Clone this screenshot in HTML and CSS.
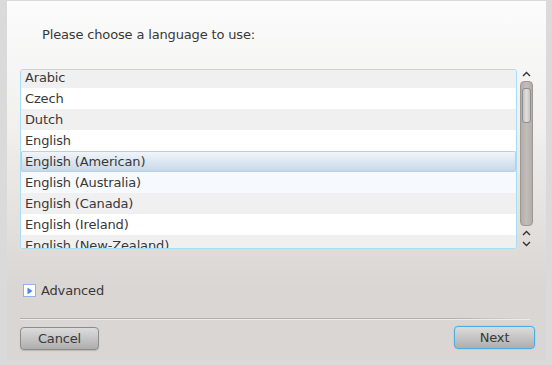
FILE: index.html
```html
<!DOCTYPE html>
<html>
<head>
    <meta charset="utf-8">
    <title>Language</title>
    <link rel="stylesheet" href="styles.css">
</head>
<body>
    <div class="panel">
        <div class="title">Please choose a language to use:</div>

        <div class="list-area">
            <div class="list">
                <div class="rows">
                    <div class="row alt">Arabic</div>
                    <div class="row">Czech</div>
                    <div class="row alt">Dutch</div>
                    <div class="row">English</div>
                    <div class="row selected">English (American)</div>
                    <div class="row hover">English (Australia)</div>
                    <div class="row alt">English (Canada)</div>
                    <div class="row">English (Ireland)</div>
                    <div class="row alt">English (New-Zealand)</div>
                </div>
            </div>

            <div class="scrollbar">
                <svg class="arrow" width="9" height="6" viewBox="0 0 9 6"><path d="M1 5 L4.5 1.5 L8 5" fill="none" stroke="#333" stroke-width="1.4"/></svg>
                <div class="trough">
                    <div class="handle"></div>
                </div>
                <svg class="arrow" width="9" height="6" viewBox="0 0 9 6"><path d="M1 5 L4.5 1.5 L8 5" fill="none" stroke="#333" stroke-width="1.4"/></svg>
                <svg class="arrow" width="9" height="6" viewBox="0 0 9 6"><path d="M1 1 L4.5 4.5 L8 1" fill="none" stroke="#333" stroke-width="1.4"/></svg>
            </div>
        </div>

        <div class="advanced">
            <span class="expander">
                <svg width="12" height="12" viewBox="0 0 12 12"><path d="M3.5 2.5 L8.5 6 L3.5 9.5 Z" fill="#4f86e6"/></svg>
            </span>
            <span>Advanced</span>
        </div>

        <div class="separator"></div>

        <div class="buttons">
            <button class="btn">Cancel</button>
            <button class="btn default">Next</button>
        </div>
    </div>
</body>
</html>
```

FILE: styles.css
```css
body {
    margin: 0;
    background-color: #dadada;
    font-family: "DejaVu Sans", sans-serif;
    font-size: 13px;
    letter-spacing: -0.15px;
    color: #383838;
}

.panel {
    margin: 1px 6px 0 7px;
    width: 539px;
    height: 359px;
    padding: 0 13px;
    box-sizing: border-box;
    background: linear-gradient(to bottom, #fcfcfc 0%, #f1f0ef 35%, #e0dcd9 68%, #dad6d3 80%, #dad6d3 100%);
}

.title {
    padding: 26px 0 0 22px;
    height: 16px;
    line-height: 16px;
    margin-bottom: 26px;
}

.list-area {
    display: flex;
    gap: 3px;
    height: 180px;
}

.list {
    width: 497px;
    height: 180px;
    box-sizing: border-box;
    border: 1px solid #a6def6;
    border-radius: 3px;
    box-shadow: inset 0 0 0 1px #d7f0fb;
    background-color: #fff;
    overflow: hidden;
}

.rows {
    margin-top: -3px;
}

.row {
    height: 21px;
    line-height: 21px;
    padding-left: 4px;
    background-color: #fff;
}

.row.alt {
    background-color: #f0f0f0;
}

.row.hover {
    background-color: #f6f9fd;
}

.row.selected {
    box-sizing: border-box;
    line-height: 19px;
    padding-left: 3px;
    border: 1px solid #bccfe0;
    border-radius: 2px;
    background: linear-gradient(to bottom, #f1f5fa, #c8d8e9);
}

.scrollbar {
    width: 13px;
    display: flex;
    flex-direction: column;
    align-items: center;
}

.arrow {
    display: block;
}

.scrollbar .arrow:first-child {
    margin-top: 2px;
    margin-bottom: 4px;
}

.trough {
    width: 13px;
    height: 145px;
    box-sizing: border-box;
    border: 1px solid #9d9893;
    border-radius: 4px;
    background: linear-gradient(to right, #b3aeaa, #c2bdb9 50%, #b3aeaa);
    padding: 6px 1px 0;
}

.handle {
    height: 35px;
    box-sizing: border-box;
    border: 1px solid #8e8e8e;
    border-radius: 3px;
    background: linear-gradient(to right, #c4c4c4, #dedede 50%, #c4c4c4);
}

.trough + .arrow {
    margin-top: 4px;
}

.trough + .arrow + .arrow {
    margin-top: 5px;
}

.advanced {
    display: flex;
    align-items: center;
    gap: 5px;
    margin-top: 34px;
    height: 14px;
}

.expander {
    display: block;
    width: 11px;
    height: 11px;
    margin-left: 3px;
    border: 1px solid #90b0ee;
    background-color: #fff;
    box-sizing: content-box;
}

.expander svg {
    display: block;
}

.separator {
    margin-top: 21px;
    height: 1px;
    width: 510px;
    background: linear-gradient(to right, #b5afaa, #b5afaa 85%, rgba(181, 175, 170, 0));
    border-bottom: 1px solid #eeebe9;
}

.buttons {
    display: flex;
    justify-content: space-between;
    margin-top: 6px;
    margin-right: -2px;
}

.btn {
    width: 79px;
    height: 23px;
    font-family: "DejaVu Sans", sans-serif;
    font-size: 13px;
    letter-spacing: -0.15px;
    color: #383838;
    border: 1px solid #8c8c8c;
    border-radius: 4px;
    background: linear-gradient(to bottom, #dcdcdc, #aeaeae);
    box-shadow: 0 1px 1px rgba(0, 0, 0, 0.15);
    padding: 0;
    margin-top: 1px;
}

.btn.default {
    width: 81px;
    margin-top: 0;
    border: 1px solid #4aaee2;
    box-shadow: 0 0 0 1px #a9d8f0;
}
```
